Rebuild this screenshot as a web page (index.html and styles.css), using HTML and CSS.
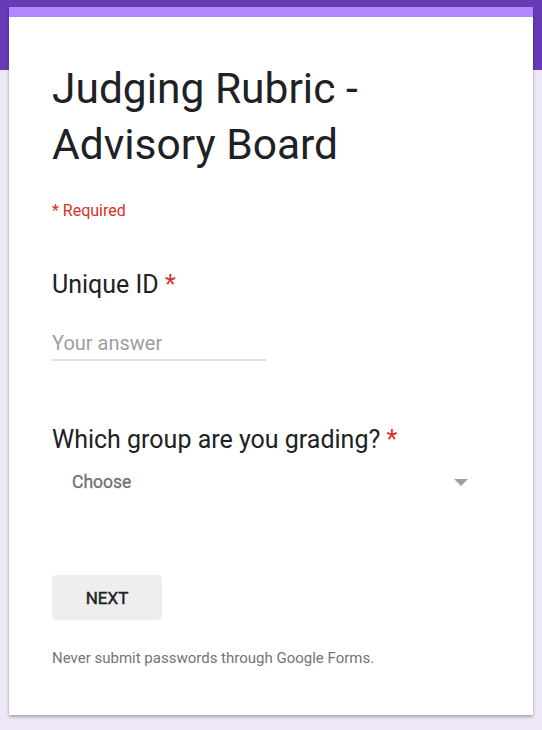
FILE: index.html
```html
<!DOCTYPE html>
<html>
<head>
<meta charset="utf-8">
<link rel="stylesheet" href="styles.css">
</head>
<body>
<div class="page">
  <div class="card">
    <div class="accent"></div>
    <div class="content">
      <h1 class="title">Judging Rubric - Advisory Board</h1>
      <div class="required-note">* Required</div>
      <div class="question q-text">
        <div class="q-title">Unique ID <span class="star">*</span></div>
        <div class="text-input">
          <span class="placeholder">Your answer</span>
        </div>
      </div>
      <div class="question q-select">
        <div class="q-title">Which group are you grading? <span class="star">*</span></div>
        <div class="select">
          <span class="select-label">Choose</span>
          <span class="arrow"></span>
        </div>
      </div>
      <div class="actions">
        <button class="next-btn">NEXT</button>
      </div>
      <div class="footer-note">Never submit passwords through Google Forms.</div>
    </div>
  </div>
</div>
</body>
</html>
```

FILE: styles.css
```css
html, body {
  margin: 0;
  padding: 0;
}
body {
  background: linear-gradient(to bottom, #673ab7 0, #673ab7 70px, #ede7f6 70px, #ede7f6 100%);
  font-family: Roboto, "Noto Sans", Arial, sans-serif;
  width: 542px;
  height: 730px;
  overflow: hidden;
}
.page {
  padding: 7px 9px 15px;
}
.card {
  width: 524px;
  height: 708px;
  background: #ffffff;
  box-shadow: 0 2px 3px rgba(0, 0, 0, 0.28), 0 0 1px rgba(0, 0, 0, 0.1);
  box-sizing: border-box;
}
.accent {
  height: 10px;
  background: #b388ff;
}
.content {
  padding: 0 43px;
}
.title {
  margin: 0;
  padding-top: 44px;
  font-size: 42.5px;
  line-height: 56px;
  font-weight: 400;
  color: #202124;
  width: 330px;
}
.required-note {
  margin-top: 28px;
  font-size: 16px;
  line-height: 20px;
  color: #d93025;
}
.q-text {
  margin-top: 49px;
}
.q-title {
  font-size: 25px;
  line-height: 30px;
  color: #202124;
}
.star {
  color: #d93025;
}
.text-input {
  margin-top: 28px;
  width: 214px;
  height: 31px;
  border-bottom: 2px solid #e0e0e0;
  box-sizing: content-box;
}
.placeholder {
  font-size: 20px;
  line-height: 30px;
  color: #9e9e9e;
}
.q-select {
  margin-top: 64px;
}
.select {
  margin-top: 12px;
  display: flex;
  align-items: center;
  justify-content: space-between;
  padding-left: 20px;
  width: 396px;
  height: 30px;
}
.select-label {
  font-size: 17.5px;
  font-weight: 400;
  color: #6f6f6f;
  -webkit-text-stroke: 0.3px #6f6f6f;
}
.arrow {
  width: 0;
  height: 0;
  border-left: 7px solid transparent;
  border-right: 7px solid transparent;
  border-top: 7px solid #a0a0a0;
}
.actions {
  margin-top: 78px;
}
.next-btn {
  width: 110px;
  height: 45px;
  border: none;
  border-radius: 4px;
  background: #eeeeee;
  font-family: Roboto, "Noto Sans", Arial, sans-serif;
  font-size: 17px;
  font-weight: 400;
  -webkit-text-stroke: 0.45px #202124;
  color: #202124;
  padding: 0;
}
.footer-note {
  margin-top: 28px;
  font-size: 15px;
  line-height: 20px;
  color: #70757a;
}
```
